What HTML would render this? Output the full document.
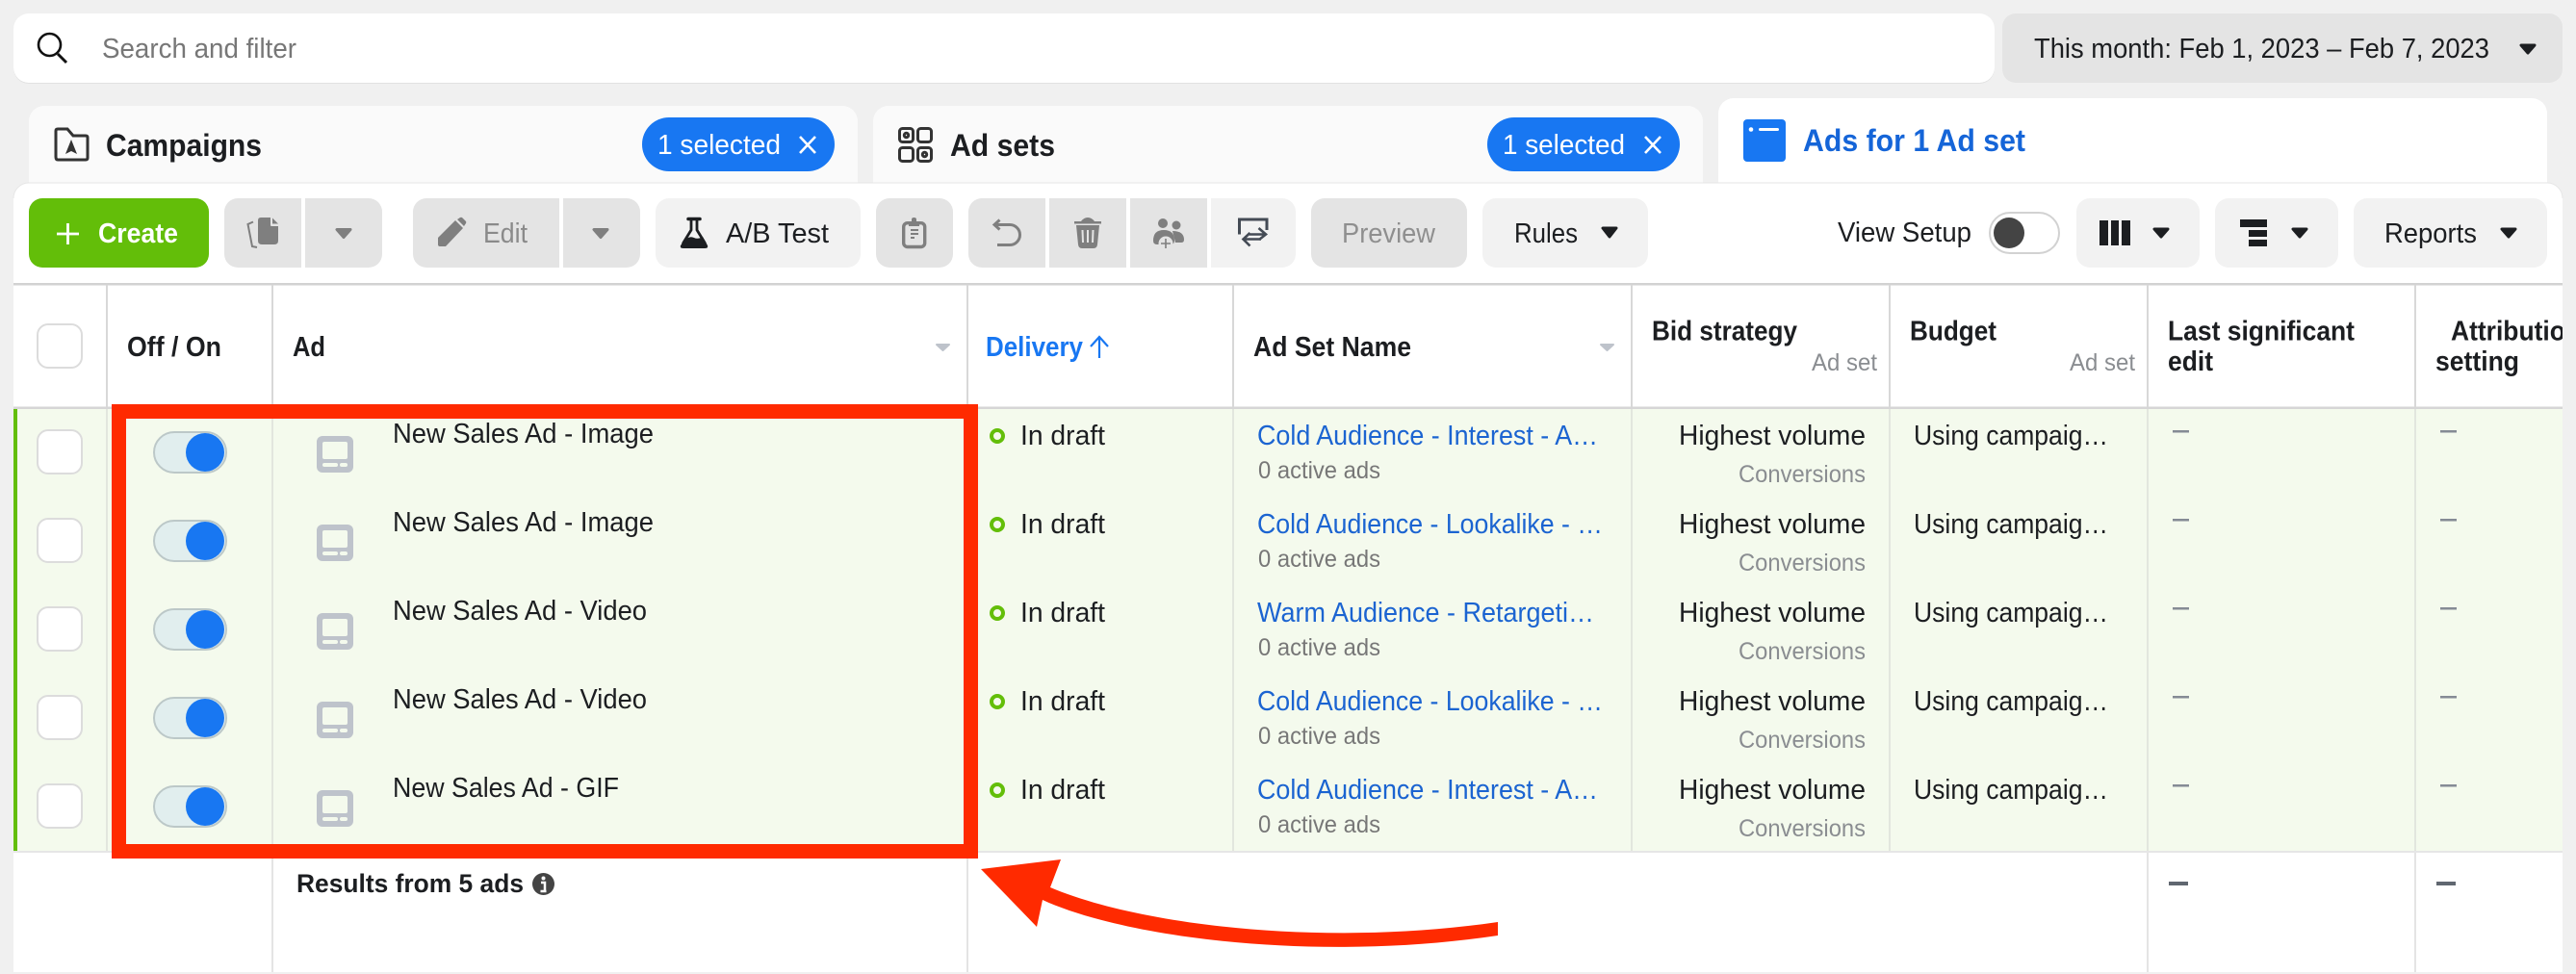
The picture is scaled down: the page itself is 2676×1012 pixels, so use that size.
<!DOCTYPE html>
<html lang="en"><head><meta charset="utf-8"><title>Ads Manager</title>
<style>
html,body{margin:0;padding:0;background:#f0f0f0;width:2676px;height:1012px;overflow:hidden}
svg{display:block}
text{font-family:"Liberation Sans",Arial,sans-serif;font-size:28.5px;fill:#1c1e21;white-space:pre}
.b{font-weight:700}
.s{font-size:25px}
.g{fill:#8a8d91}
.g2{fill:#777}
.l{fill:#1b64d1}
.t{font-size:32px;font-weight:700}
.sep{stroke:#d8d8d8;stroke-width:2;fill:none}
.sep2{stroke:#dde1da;stroke-width:1.600;fill:none}
.car{stroke-linejoin:round;stroke-width:3}
</style></head><body>
<svg xmlns="http://www.w3.org/2000/svg" width="2676" height="1012" viewBox="0 0 2676 1012">
<defs><clipPath id="c"><rect x="14" y="296" width="2648" height="714"/></clipPath></defs>
<rect width="2676" height="1012" fill="#f0f0f0"/>

<!-- search -->
<rect x="14" y="15" width="2058" height="72" rx="16" fill="#e2e2e2"/>
<rect x="14" y="14" width="2058" height="72" rx="16" fill="#fff"/>
<ellipse cx="51.500" cy="46.500" rx="11.500" ry="11.500" fill="none" stroke="#111" stroke-width="2.600"/>
<path d="M60 56l9 9" stroke="#111" stroke-width="3" fill="none"/>
<text x="106" y="60" textLength="202" lengthAdjust="spacingAndGlyphs" style="fill:#777">Search and filter</text>
<rect x="2080" y="14" width="582" height="72" rx="14" fill="#e4e4e4"/>
<text x="2113" y="60" textLength="473" lengthAdjust="spacingAndGlyphs">This month: Feb 1, 2023 – Feb 7, 2023</text>
<path d="M2619 47h14l-7 8z" fill="#1c1e21" stroke="#1c1e21" class="car"/>

<!-- tabs -->
<path d="M30 200V126a16 16 0 0 1 16-16H875a16 16 0 0 1 16 16V200z" fill="#fafafa"/>
<path d="M907 200V126a16 16 0 0 1 16-16H1753a16 16 0 0 1 16 16V200z" fill="#fafafa"/>
<path d="M1785 200V118a16 16 0 0 1 16-16H2630a16 16 0 0 1 16 16V200z" fill="#fff"/>
<path d="M58 163V136q0-2 2-2h10l6 7h13q2 0 2 2v21q0 2-2 2H60q-2 0-2-3z" fill="none" stroke="#333" stroke-width="3"/>
<path d="M74 145l6 15-6-3-6 3z" fill="#333"/>
<text x="110" y="162" class="t" textLength="162" lengthAdjust="spacingAndGlyphs">Campaigns</text>
<rect x="667" y="122" width="200" height="56" rx="28" fill="#1877f2"/>
<text x="683" y="160" textLength="128" lengthAdjust="spacingAndGlyphs" style="fill:#fff">1 selected</text>
<path d="M831 142l16 17M847 142l-16 17" stroke="#fff" stroke-width="2.600" fill="none"/>

<g fill="none" stroke="#333" stroke-width="3">
<rect x="934.500" y="133.500" width="14" height="14" rx="3"/><rect x="953.500" y="133.500" width="14" height="14" rx="3"/>
<rect x="934.500" y="153.500" width="14" height="14" rx="3"/><rect x="953.500" y="153.500" width="14" height="14" rx="3"/>
<circle cx="941.500" cy="140.500" r="2.200"/><circle cx="960.500" cy="160.500" r="2.200"/>
</g>
<text x="987" y="162" class="t" textLength="109" lengthAdjust="spacingAndGlyphs">Ad sets</text>
<rect x="1545" y="122" width="200" height="56" rx="28" fill="#1877f2"/>
<text x="1561" y="160" textLength="127" lengthAdjust="spacingAndGlyphs" style="fill:#fff">1 selected</text>
<path d="M1709 142l16 17M1725 142l-16 17" stroke="#fff" stroke-width="2.600" fill="none"/>

<rect x="1811" y="124" width="44" height="44" rx="4" fill="#1877f2"/>
<circle cx="1819" cy="134.500" r="2.300" fill="#fff"/><rect x="1827" y="133" width="21" height="3" rx="1.500" fill="#fff"/>
<text x="1873" y="157" class="t" textLength="231" lengthAdjust="spacingAndGlyphs" style="fill:#1565d8">Ads for 1 Ad set</text>

<!-- panel -->
<path d="M14 1010V206a16 16 0 0 1 16-16H2646a16 16 0 0 1 16 16V1010z" fill="#fff"/>
<path d="M14 206a16 16 0 0 1 16-16H2646a16 16 0 0 1 16 16" fill="none" stroke="#e6e6e6" stroke-width="1"/>

<!-- toolbar -->
<rect x="30" y="206" width="187" height="72" rx="14" fill="#63be09"/>
<path d="M70.500 232v22M59 243h23" stroke="#fff" stroke-width="2.800"/>
<text x="102" y="252" class="b" textLength="83" lengthAdjust="spacingAndGlyphs" style="fill:#fff">Create</text>
<path d="M247 206h66v72h-66a14 14 0 0 1-14-14v-44a14 14 0 0 1 14-14z" fill="#e4e4e4"/>
<path d="M317 206h66a14 14 0 0 1 14 14v44a14 14 0 0 1-14 14h-66z" fill="#e4e4e4"/>
<path d="M271 226H281V234q0 1 1 1H289V250q0 4-4 4H272q-4 0-4-4V229q0-3 3-3zM283 226.500L289 232.500H283z" fill="#7f7f7f"/>
<path d="M263 230.500L257.500 233L262 256L267 257" fill="none" stroke="#7f7f7f" stroke-width="2"/>
<path d="M350 238.500h14l-7 8z" fill="#7f7f7f" stroke="#7f7f7f" class="car"/>
<path d="M443 206h138v72h-138a14 14 0 0 1-14-14v-44a14 14 0 0 1 14-14z" fill="#e4e4e4"/>
<path d="M585 206h66a14 14 0 0 1 14 14v44a14 14 0 0 1-14 14h-66z" fill="#e4e4e4"/>
<path d="M455 247L473 229L481 237L463 256H457q-2 0-2-2zM475 228l3-2q1-.5 2 0l4 4q.5 1 0 2l-2 3z" fill="#7f7f7f"/>
<text x="502" y="252" textLength="46" lengthAdjust="spacingAndGlyphs" style="fill:#8a8a8a">Edit</text>
<path d="M617 238.500h14l-7 8z" fill="#7f7f7f" stroke="#7f7f7f" class="car"/>
<rect x="681" y="206" width="213" height="72" rx="14" fill="#f2f2f2"/>
<path d="M715 227.500h12" fill="none" stroke="#1c1e21" stroke-width="3.500" stroke-linecap="round"/>
<path d="M718 228v11l-8 13q-2 4 3 4h16q5 0 3-4l-8-13v-11" fill="none" stroke="#1c1e21" stroke-width="2.800"/>
<path d="M713 248q4-3 8-1t9-1l5 9q1 3-3 3h-22q-4 0-3-3z" fill="#1c1e21"/>
<text x="754" y="252" textLength="107" lengthAdjust="spacingAndGlyphs">A/B Test</text>

<rect x="910" y="206" width="80" height="72" rx="14" fill="#e4e4e4"/>
<rect x="938.700" y="231.700" width="22" height="24.800" rx="4" fill="none" stroke="#7f7f7f" stroke-width="3.400"/>
<path d="M944 235v-3l3-2v-2q0-2 2.500-2t2.500 2v2l3 2v3z" fill="#7f7f7f"/>
<path d="M946 239h8M946 243h8M946 247h4" stroke="#7f7f7f" stroke-width="2"/>

<path d="M1020 206h66v72h-66a14 14 0 0 1-14-14v-44a14 14 0 0 1 14-14z" fill="#e4e4e4"/>
<rect x="1090" y="206" width="80" height="72" fill="#e4e4e4"/>
<rect x="1174" y="206" width="80" height="72" fill="#e4e4e4"/>
<path d="M1258 206h74a14 14 0 0 1 14 14v44a14 14 0 0 1-14 14h-74z" fill="#f2f2f2"/>
<path d="M1038.500 228.500L1033 233.500L1038.500 238.500M1033 233.500H1049a10.500 10.500 0 0 1 0 21H1036" fill="none" stroke="#7f7f7f" stroke-width="3"/>
<path d="M1116 230h7q3-4 7-4t7 4h7v2.500h-28z" fill="#7f7f7f"/>
<path d="M1118 234h24l-2 20q-.5 4-4 4h-12q-3.500 0-4-4z" fill="#7f7f7f"/>
<path d="M1124.500 239l.5 13M1130 239v13M1135.500 239l-.5 13" stroke="#e4e4e4" stroke-width="2"/>
<circle cx="1208" cy="232" r="5" fill="#7f7f7f"/><circle cx="1222" cy="234" r="4.500" fill="#7f7f7f"/>
<path d="M1198 250q0-11 11-11t11 11q0 4-4 4h-14q-4 0-4-4z" fill="#7f7f7f"/>
<path d="M1218 240q12 0 12 9q0 3-3 3h-6z" fill="#7f7f7f"/>
<circle cx="1211" cy="253" r="7.500" fill="#e4e4e4"/>
<path d="M1211 248v10M1206 253h10" stroke="#7f7f7f" stroke-width="1.600"/>
<path d="M1287.500 243.500V228H1316V239" fill="none" stroke="#444b55" stroke-width="3"/>
<path d="M1298 243.500H1315M1307.500 237L1315 243.500L1308 249M1310 248.500H1291.500M1298.500 242L1291.500 248.500L1298.500 255.500" fill="none" stroke="#444b55" stroke-width="2.600"/>
<rect x="1362" y="206" width="162" height="72" rx="14" fill="#e4e4e4"/>
<text x="1394" y="252" textLength="97" lengthAdjust="spacingAndGlyphs" style="fill:#8f8f8f">Preview</text>
<rect x="1540" y="206" width="172" height="72" rx="14" fill="#f2f2f2"/>
<text x="1573" y="252" textLength="66" lengthAdjust="spacingAndGlyphs">Rules</text>
<path d="M1665 237h14l-7 9z" fill="#1c1e21" stroke="#1c1e21" class="car"/>
<text x="1909" y="251" textLength="139" lengthAdjust="spacingAndGlyphs">View Setup</text>
<rect x="2067" y="221" width="72" height="42" rx="21" fill="#fff" stroke="#d2d2d2" stroke-width="2"/>
<ellipse cx="2087" cy="242" rx="16" ry="16" fill="#444"/>
<rect x="2157" y="206" width="128" height="72" rx="14" fill="#f2f2f2"/>
<path d="M2181 229h9v26h-9zM2193 229h8v26h-8zM2204 229h9v26h-9z" fill="#1c1e21"/>
<path d="M2238 238h14l-7 8z" fill="#1c1e21" stroke="#1c1e21" class="car"/>
<rect x="2301" y="206" width="128" height="72" rx="14" fill="#f2f2f2"/>
<path d="M2327 228h28v8h-28zM2336 239h19v7h-19zM2336 249h19v7h-19z" fill="#1c1e21"/>
<path d="M2382 238h14l-7 8z" fill="#1c1e21" stroke="#1c1e21" class="car"/>
<rect x="2445" y="206" width="201" height="72" rx="14" fill="#f2f2f2"/>
<text x="2477" y="252" textLength="96" lengthAdjust="spacingAndGlyphs">Reports</text>
<path d="M2599 238h14l-7 8z" fill="#1c1e21" stroke="#1c1e21" class="car"/>

<!-- rows bg -->
<rect x="14" y="424" width="2648" height="460" fill="#f4faed"/>
<rect x="14" y="424" width="4" height="460" fill="#63be09"/>
<rect x="14" y="294" width="2648" height="2.500" fill="#d2d2d2"/>
<rect x="14" y="422.500" width="2648" height="2.500" fill="#d6d6d6"/>
<rect x="14" y="884" width="2648" height="2" fill="#e6e6e6"/>
<path class="sep" d="M111 296V423M283 296V423M1005 296V423M1281 296V423M1695 296V423M1963 296V423M2231 296V423M2509 296V423"/>
<path class="sep2" d="M111 425V884M283 425V884M1005 425V884M1281 425V884M1695 425V884M1963 425V884M2231 425V884M2509 425V884"/>
<path class="sep2" style="stroke:#dedede" d="M283 886V1010M1005 886V1010M2231 886V1010M2509 886V1010"/>

<!-- header -->
<rect x="39" y="337" width="46" height="45" rx="11" fill="#fff" stroke="#dcdcdc" stroke-width="2"/>
<text x="132" y="370" class="b" textLength="98" lengthAdjust="spacingAndGlyphs">Off / On</text>
<text x="304" y="370" class="b" textLength="34" lengthAdjust="spacingAndGlyphs">Ad</text>
<path d="M973 358h13l-6.500 6z" fill="#bec3cb" stroke="#bec3cb" stroke-width="2" stroke-linejoin="round"/>
<text x="1024" y="370" class="b" textLength="101" lengthAdjust="spacingAndGlyphs" style="fill:#1877f2">Delivery</text>
<path d="M1142 350v22M1133 360l9-10 9 10" fill="none" stroke="#1877f2" stroke-width="2.200"/>
<text x="1302" y="370" class="b" textLength="164" lengthAdjust="spacingAndGlyphs">Ad Set Name</text>
<path d="M1663 358h13l-6.500 6z" fill="#bec3cb" stroke="#bec3cb" stroke-width="2" stroke-linejoin="round"/>
<text x="1716" y="353.500" class="b" textLength="151" lengthAdjust="spacingAndGlyphs">Bid strategy</text>
<text x="1882" y="385" class="s g" textLength="68" lengthAdjust="spacingAndGlyphs">Ad set</text>
<text x="1984" y="353.500" class="b" textLength="90" lengthAdjust="spacingAndGlyphs">Budget</text>
<text x="2150" y="385" class="s g" textLength="68" lengthAdjust="spacingAndGlyphs">Ad set</text>
<text x="2252" y="353.500" class="b" textLength="194" lengthAdjust="spacingAndGlyphs">Last significant</text>
<text x="2252" y="385" class="b" textLength="47" lengthAdjust="spacingAndGlyphs">edit</text>
<g clip-path="url(#c)"><text x="2546" y="353.500" class="b" textLength="135" lengthAdjust="spacingAndGlyphs">Attribution</text></g>
<text x="2530" y="385" class="b" textLength="87" lengthAdjust="spacingAndGlyphs">setting</text>

<!-- row 1 -->
<g>
<rect x="39" y="447" width="46" height="45" rx="11" fill="#fff" stroke="#dcdcdc" stroke-width="2"/>
<rect x="160" y="449" width="75" height="42" rx="21" fill="#e1eeee" stroke="#bcc8c8" stroke-width="2"/>
<circle cx="213" cy="470" r="20" fill="#1877f2"/>
<rect x="329" y="453" width="38" height="38" rx="6" fill="#bec3cb"/><rect x="335" y="459" width="26" height="18" rx="2" fill="#f4faed"/><rect x="335" y="481" width="16" height="4" rx="2" fill="#f4faed"/><rect x="353" y="481" width="8" height="4" rx="2" fill="#f4faed"/>
<text x="408" y="460" textLength="271" lengthAdjust="spacingAndGlyphs">New Sales Ad - Image</text>
<circle cx="1036" cy="453" r="6" fill="none" stroke="#63be09" stroke-width="4"/>
<text x="1060" y="462" textLength="88" lengthAdjust="spacingAndGlyphs">In draft</text>
<text x="1306" y="462" class="l" textLength="354" lengthAdjust="spacingAndGlyphs">Cold Audience - Interest - A…</text>
<text x="1307" y="497" class="s g2" textLength="127" lengthAdjust="spacingAndGlyphs">0 active ads</text>
<text x="1744" y="462" textLength="194" lengthAdjust="spacingAndGlyphs">Highest volume</text>
<text x="1806" y="501" class="s g" textLength="132" lengthAdjust="spacingAndGlyphs">Conversions</text>
<text x="1988" y="462" textLength="202" lengthAdjust="spacingAndGlyphs">Using campaig…</text>
<rect x="2257" y="447" width="17" height="2.500" fill="#858b95"/><rect x="2535" y="447" width="17" height="2.500" fill="#858b95"/>
</g>
<!-- row 2 -->
<g transform="translate(0 92)">
<rect x="39" y="447" width="46" height="45" rx="11" fill="#fff" stroke="#dcdcdc" stroke-width="2"/>
<rect x="160" y="449" width="75" height="42" rx="21" fill="#e1eeee" stroke="#bcc8c8" stroke-width="2"/>
<circle cx="213" cy="470" r="20" fill="#1877f2"/>
<rect x="329" y="453" width="38" height="38" rx="6" fill="#bec3cb"/><rect x="335" y="459" width="26" height="18" rx="2" fill="#f4faed"/><rect x="335" y="481" width="16" height="4" rx="2" fill="#f4faed"/><rect x="353" y="481" width="8" height="4" rx="2" fill="#f4faed"/>
<text x="408" y="460" textLength="271" lengthAdjust="spacingAndGlyphs">New Sales Ad - Image</text>
<circle cx="1036" cy="453" r="6" fill="none" stroke="#63be09" stroke-width="4"/>
<text x="1060" y="462" textLength="88" lengthAdjust="spacingAndGlyphs">In draft</text>
<text x="1306" y="462" class="l" textLength="359" lengthAdjust="spacingAndGlyphs">Cold Audience - Lookalike - …</text>
<text x="1307" y="497" class="s g2" textLength="127" lengthAdjust="spacingAndGlyphs">0 active ads</text>
<text x="1744" y="462" textLength="194" lengthAdjust="spacingAndGlyphs">Highest volume</text>
<text x="1806" y="501" class="s g" textLength="132" lengthAdjust="spacingAndGlyphs">Conversions</text>
<text x="1988" y="462" textLength="202" lengthAdjust="spacingAndGlyphs">Using campaig…</text>
<rect x="2257" y="447" width="17" height="2.500" fill="#858b95"/><rect x="2535" y="447" width="17" height="2.500" fill="#858b95"/>
</g>
<!-- row 3 -->
<g transform="translate(0 184)">
<rect x="39" y="447" width="46" height="45" rx="11" fill="#fff" stroke="#dcdcdc" stroke-width="2"/>
<rect x="160" y="449" width="75" height="42" rx="21" fill="#e1eeee" stroke="#bcc8c8" stroke-width="2"/>
<circle cx="213" cy="470" r="20" fill="#1877f2"/>
<rect x="329" y="453" width="38" height="38" rx="6" fill="#bec3cb"/><rect x="335" y="459" width="26" height="18" rx="2" fill="#f4faed"/><rect x="335" y="481" width="16" height="4" rx="2" fill="#f4faed"/><rect x="353" y="481" width="8" height="4" rx="2" fill="#f4faed"/>
<text x="408" y="460" textLength="264" lengthAdjust="spacingAndGlyphs">New Sales Ad - Video</text>
<circle cx="1036" cy="453" r="6" fill="none" stroke="#63be09" stroke-width="4"/>
<text x="1060" y="462" textLength="88" lengthAdjust="spacingAndGlyphs">In draft</text>
<text x="1306" y="462" class="l" textLength="350" lengthAdjust="spacingAndGlyphs">Warm Audience - Retargeti…</text>
<text x="1307" y="497" class="s g2" textLength="127" lengthAdjust="spacingAndGlyphs">0 active ads</text>
<text x="1744" y="462" textLength="194" lengthAdjust="spacingAndGlyphs">Highest volume</text>
<text x="1806" y="501" class="s g" textLength="132" lengthAdjust="spacingAndGlyphs">Conversions</text>
<text x="1988" y="462" textLength="202" lengthAdjust="spacingAndGlyphs">Using campaig…</text>
<rect x="2257" y="447" width="17" height="2.500" fill="#858b95"/><rect x="2535" y="447" width="17" height="2.500" fill="#858b95"/>
</g>
<!-- row 4 -->
<g transform="translate(0 276)">
<rect x="39" y="447" width="46" height="45" rx="11" fill="#fff" stroke="#dcdcdc" stroke-width="2"/>
<rect x="160" y="449" width="75" height="42" rx="21" fill="#e1eeee" stroke="#bcc8c8" stroke-width="2"/>
<circle cx="213" cy="470" r="20" fill="#1877f2"/>
<rect x="329" y="453" width="38" height="38" rx="6" fill="#bec3cb"/><rect x="335" y="459" width="26" height="18" rx="2" fill="#f4faed"/><rect x="335" y="481" width="16" height="4" rx="2" fill="#f4faed"/><rect x="353" y="481" width="8" height="4" rx="2" fill="#f4faed"/>
<text x="408" y="460" textLength="264" lengthAdjust="spacingAndGlyphs">New Sales Ad - Video</text>
<circle cx="1036" cy="453" r="6" fill="none" stroke="#63be09" stroke-width="4"/>
<text x="1060" y="462" textLength="88" lengthAdjust="spacingAndGlyphs">In draft</text>
<text x="1306" y="462" class="l" textLength="359" lengthAdjust="spacingAndGlyphs">Cold Audience - Lookalike - …</text>
<text x="1307" y="497" class="s g2" textLength="127" lengthAdjust="spacingAndGlyphs">0 active ads</text>
<text x="1744" y="462" textLength="194" lengthAdjust="spacingAndGlyphs">Highest volume</text>
<text x="1806" y="501" class="s g" textLength="132" lengthAdjust="spacingAndGlyphs">Conversions</text>
<text x="1988" y="462" textLength="202" lengthAdjust="spacingAndGlyphs">Using campaig…</text>
<rect x="2257" y="447" width="17" height="2.500" fill="#858b95"/><rect x="2535" y="447" width="17" height="2.500" fill="#858b95"/>
</g>
<!-- row 5 -->
<g transform="translate(0 368)">
<rect x="39" y="447" width="46" height="45" rx="11" fill="#fff" stroke="#dcdcdc" stroke-width="2"/>
<rect x="160" y="449" width="75" height="42" rx="21" fill="#e1eeee" stroke="#bcc8c8" stroke-width="2"/>
<circle cx="213" cy="470" r="20" fill="#1877f2"/>
<rect x="329" y="453" width="38" height="38" rx="6" fill="#bec3cb"/><rect x="335" y="459" width="26" height="18" rx="2" fill="#f4faed"/><rect x="335" y="481" width="16" height="4" rx="2" fill="#f4faed"/><rect x="353" y="481" width="8" height="4" rx="2" fill="#f4faed"/>
<text x="408" y="460" textLength="235" lengthAdjust="spacingAndGlyphs">New Sales Ad - GIF</text>
<circle cx="1036" cy="453" r="6" fill="none" stroke="#63be09" stroke-width="4"/>
<text x="1060" y="462" textLength="88" lengthAdjust="spacingAndGlyphs">In draft</text>
<text x="1306" y="462" class="l" textLength="354" lengthAdjust="spacingAndGlyphs">Cold Audience - Interest - A…</text>
<text x="1307" y="497" class="s g2" textLength="127" lengthAdjust="spacingAndGlyphs">0 active ads</text>
<text x="1744" y="462" textLength="194" lengthAdjust="spacingAndGlyphs">Highest volume</text>
<text x="1806" y="501" class="s g" textLength="132" lengthAdjust="spacingAndGlyphs">Conversions</text>
<text x="1988" y="462" textLength="202" lengthAdjust="spacingAndGlyphs">Using campaig…</text>
<rect x="2257" y="447" width="17" height="2.500" fill="#858b95"/><rect x="2535" y="447" width="17" height="2.500" fill="#858b95"/>
</g>

<!-- results row -->
<text x="308" y="927" class="b" style="font-size:26.500px" textLength="236" lengthAdjust="spacingAndGlyphs">Results from 5 ads</text>
<circle cx="564.500" cy="918.500" r="11.500" fill="#444"/>
<circle cx="564.500" cy="912.500" r="2" fill="#fff"/><path d="M562 917h4v9M561.500 926h6" fill="none" stroke="#fff" stroke-width="2.500"/>
<rect x="2253" y="916" width="20" height="4" fill="#606770"/><rect x="2531" y="916" width="20" height="4" fill="#606770"/>

<!-- red annotation -->
<path fill-rule="evenodd" d="M116 420H1016V892H116zM131 435V877H1001V435z" fill="#ff2a00"/>
<path d="M1019 903L1102 893L1091 922C1180 960 1370 985 1556 958L1556 972C1370 1000 1170 975 1083 935L1077 963z" fill="#ff2a00"/>
</svg>
</body></html>
